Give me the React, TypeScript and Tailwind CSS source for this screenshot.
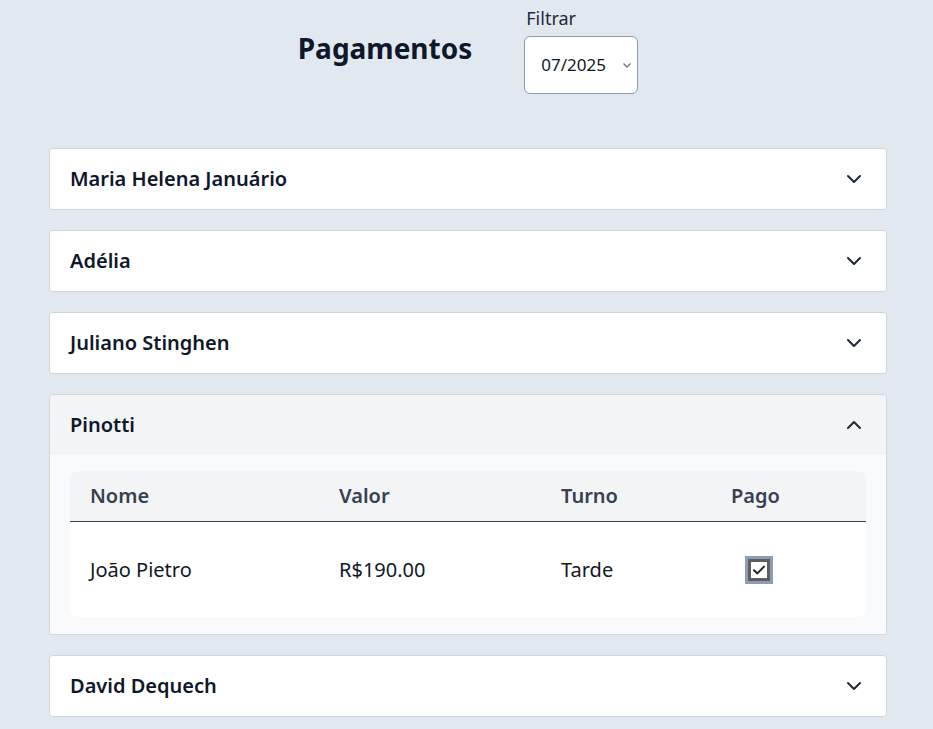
import React, { useState } from "react";
import { ChevronDown, ChevronUp } from "lucide-react";

type Aluno = {
  nome: string;
  valor: number;
  turno: string;
  pago: boolean;
};

type Responsavel = {
  id: number;
  nome: string;
  alunos: Aluno[];
};

const responsaveis: Responsavel[] = [
  { id: 1, nome: "Maria Helena Januário", alunos: [] },
  { id: 2, nome: "Adélia", alunos: [] },
  { id: 3, nome: "Juliano Stinghen", alunos: [] },
  {
    id: 4,
    nome: "Pinotti",
    alunos: [{ nome: "João Pietro", valor: 190, turno: "Tarde", pago: true }],
  },
  { id: 5, nome: "David Dequech", alunos: [] },
];

const Checkbox = ({ checked }: { checked: boolean }) => (
  <div className="w-[28px] h-[28px] border-[3px] border-[#8d9bb4] flex items-center justify-center">
    <div className="w-[22px] h-[22px] border-[3px] border-[#5e5e5e] bg-white flex items-center justify-center">
      {checked && (
        <svg width="14" height="14" viewBox="0 0 14 14" fill="none">
          <path
            d="M2 7.2 5.4 10.4 12 3.6"
            stroke="#222"
            strokeWidth="2"
            strokeLinecap="round"
            strokeLinejoin="round"
          />
        </svg>
      )}
    </div>
  </div>
);

const App = () => {
  const [aberto, setAberto] = useState<number | null>(4);
  const [mes, setMes] = useState("07/2025");

  return (
    <div className="min-h-screen bg-[#e2e8f0] font-['Noto_Sans','Open_Sans',sans-serif] pb-6">
      {/* cabeçalho */}
      <div className="flex justify-center items-center gap-[52px] pt-[5px] pl-[3px]">
        <h1 className="text-[28px] font-bold text-[#0f172a] leading-9 -mt-[3px]">Pagamentos</h1>
        <div className="flex flex-col">
          <label className="text-lg leading-7 text-[#1f2937] mb-1 ml-[2px] -mt-[1px]">Filtrar</label>
          <div className="relative w-[114px] h-[58px]">
            <select
              value={mes}
              onChange={(e) => setMes(e.target.value)}
              className="appearance-none w-full h-full rounded-md border border-[#8e99ae] bg-white pl-4 text-[17px] text-[#111827] outline-none"
            >
              <option>06/2025</option>
              <option>07/2025</option>
              <option>08/2025</option>
            </select>
            <svg
              className="absolute right-[6px] top-[26px] pointer-events-none"
              width="10"
              height="7"
              viewBox="0 0 10 7"
              fill="none"
            >
              <path d="M1.5 1.5 5 5 8.5 1.5" stroke="#6b7280" strokeWidth="1.3" />
            </svg>
          </div>
        </div>
      </div>

      {/* lista */}
      <div className="mt-[54px] ml-[49px] mr-[46px] flex flex-col gap-[20px]">
        {responsaveis.map((r) => {
          const isOpen = aberto === r.id;
          return (
            <div key={r.id} className="bg-white border border-[#d1d5db] rounded overflow-hidden">
              <button
                onClick={() => setAberto(isOpen ? null : r.id)}
                className={`w-full h-[60px] px-5 flex items-center justify-between text-left ${
                  isOpen ? "bg-[#f3f4f6]" : "bg-white"
                }`}
              >
                <span className="text-xl font-semibold text-[#0f172a]">{r.nome}</span>
                {isOpen ? (
                  <ChevronUp size={24} className="text-[#1f2937]" />
                ) : (
                  <ChevronDown size={24} className="text-[#1f2937]" />
                )}
              </button>
              {isOpen && (
                <div className="bg-[#f9fafb] px-5 pt-4 pb-[17px]">
                  <div className="bg-white rounded-lg overflow-hidden">
                    <div className="grid grid-cols-[249px_222px_170px_1fr] h-[51px] bg-[#f3f4f6] border-b border-[#374151] items-center text-xl font-semibold text-[#374151]">
                      <div className="pl-5">Nome</div>
                      <div className="pl-5">Valor</div>
                      <div className="pl-5">Turno</div>
                      <div className="pl-5">Pago</div>
                    </div>
                    {r.alunos.map((a) => (
                      <div
                        key={a.nome}
                        className="grid grid-cols-[249px_222px_170px_1fr] h-[95px] items-center text-xl text-[#111827]"
                      >
                        <div className="pl-5">{a.nome}</div>
                        <div className="pl-5">R${a.valor.toFixed(2)}</div>
                        <div className="pl-5">{a.turno}</div>
                        <div className="pl-[34px]">
                          <Checkbox checked={a.pago} />
                        </div>
                      </div>
                    ))}
                  </div>
                </div>
              )}
            </div>
          );
        })}
      </div>
    </div>
  );
};

export default App;
